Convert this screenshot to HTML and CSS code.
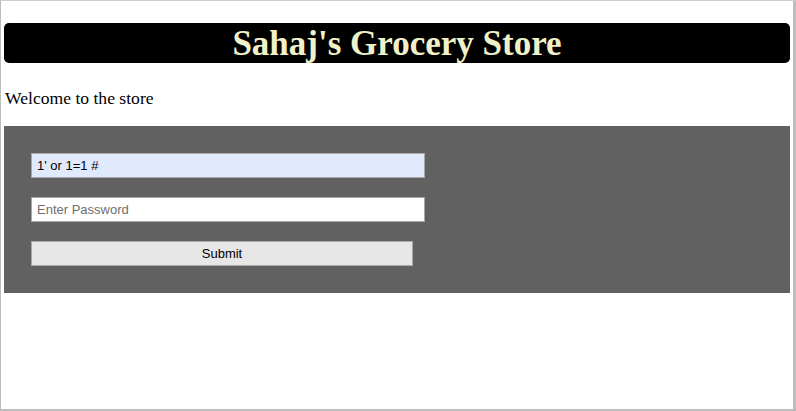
FILE: index.html
```html
<!DOCTYPE html>
<html>
<head>
<meta charset="utf-8">
<link rel="stylesheet" href="styles.css">
</head>
<body>
<div class="frame">
  <h1 class="title">Sahaj's Grocery Store</h1>
  <p class="welcome">Welcome to the store</p>
  <form class="panel">
    <input class="field filled" type="text" value="1' or 1=1 #">
    <input class="field" type="password" placeholder="Enter Password">
    <button class="submit" type="button">Submit</button>
  </form>
</div>
</body>
</html>
```

FILE: styles.css
```css
html, body {
  margin: 0;
  padding: 0;
  background: #fff;
}
.frame {
  box-sizing: border-box;
  width: 796px;
  height: 411px;
  border-top: 1px solid #cfcfcf;
  border-left: 1px solid #bdbdbd;
  border-right: 3px solid #bdbdbd;
  border-bottom: 2px solid #bdbdbd;
  padding: 22px 3px 0 3px;
  font-family: "Liberation Serif", serif;
}
.title {
  margin: 0;
  height: 40px;
  background: #000;
  color: #f1f1c9;
  border-radius: 5px;
  text-align: center;
  font-family: "Liberation Serif", serif;
  font-weight: bold;
  font-size: 35px;
  line-height: 42px;
}
.welcome {
  margin: 0;
  padding: 0 1px;
  height: 63px;
  font-size: 17.6px;
  line-height: 70px;
  color: #000;
}
.panel {
  margin: 0;
  background: #616161;
  padding: 27px 0 27px 27px;
  display: flex;
  flex-direction: column;
  align-items: flex-start;
  gap: 19px;
}
.field {
  box-sizing: border-box;
  width: 394px;
  height: 25px;
  margin: 0;
  padding: 0 5px;
  border: 1px solid #a9a9a9;
  background: #fff;
  font-family: "Liberation Sans", Arial, sans-serif;
  font-size: 13px;
  color: #000;
  outline: none;
}
.field.filled {
  background: #e1e9fc;
}
.field::placeholder {
  color: #6f6f6f;
}
.submit {
  box-sizing: border-box;
  width: 382px;
  height: 25px;
  margin: 0;
  padding: 0;
  border: 1px solid #a9a9a9;
  background: #e7e7e7;
  font-family: "Liberation Sans", Arial, sans-serif;
  font-size: 13px;
  color: #000;
}
```
